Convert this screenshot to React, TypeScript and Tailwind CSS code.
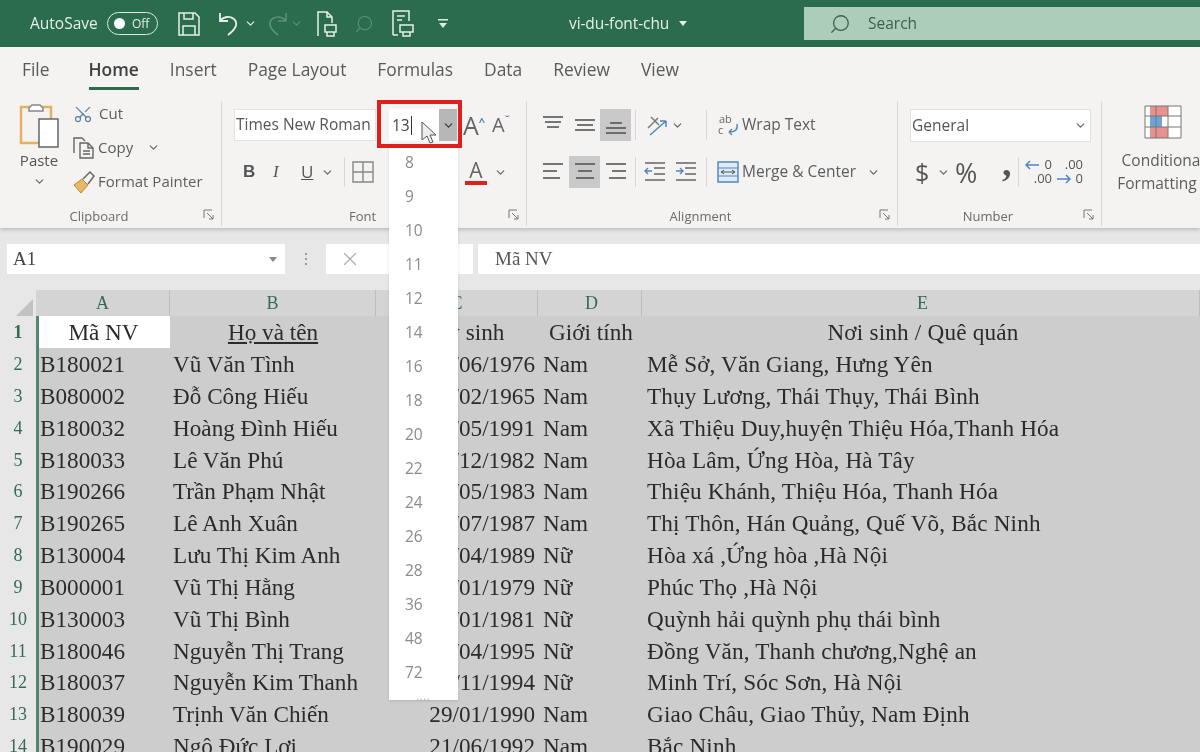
import { Scissors, Search, ChevronDown, X } from 'lucide-react'

const sheetRows = [
  ['B180021', 'Vũ Văn Tình', '12/06/1976', 'Nam', 'Mễ Sở, Văn Giang, Hưng Yên'],
  ['B080002', 'Đỗ Công Hiếu', '15/02/1965', 'Nam', 'Thụy Lương, Thái Thụy, Thái Bình'],
  ['B180032', 'Hoàng Đình Hiếu', '20/05/1991', 'Nam', 'Xã Thiệu Duy,huyện Thiệu Hóa,Thanh Hóa'],
  ['B180033', 'Lê Văn Phú', '10/12/1982', 'Nam', 'Hòa Lâm, Ứng Hòa, Hà Tây'],
  ['B190266', 'Trần Phạm Nhật', '18/05/1983', 'Nam', 'Thiệu Khánh, Thiệu Hóa, Thanh Hóa'],
  ['B190265', 'Lê Anh Xuân', '22/07/1987', 'Nam', 'Thị Thôn, Hán Quảng, Quế Võ, Bắc Ninh'],
  ['B130004', 'Lưu Thị Kim Anh', '14/04/1989', 'Nữ', 'Hòa xá ,Ứng hòa ,Hà Nội'],
  ['B000001', 'Vũ Thị Hằng', '11/01/1979', 'Nữ', 'Phúc Thọ ,Hà Nội'],
  ['B130003', 'Vũ Thị Bình', '25/01/1981', 'Nữ', 'Quỳnh hải quỳnh phụ thái bình'],
  ['B180046', 'Nguyễn Thị Trang', '16/04/1995', 'Nữ', 'Đồng Văn, Thanh chương,Nghệ an'],
  ['B180037', 'Nguyễn Kim Thanh', '19/11/1994', 'Nữ', 'Minh Trí, Sóc Sơn, Hà Nội'],
  ['B180039', 'Trịnh Văn Chiến', '29/01/1990', 'Nam', 'Giao Châu, Giao Thủy, Nam Định'],
  ['B190029', 'Ngô Đức Lợi', '21/06/1992', 'Nam', 'Bắc Ninh'],
]

const sizes = [8, 9, 10, 11, 12, 14, 16, 18, 20, 22, 24, 26, 28, 36, 48, 72]
const tabs = ['File', 'Home', 'Insert', 'Page Layout', 'Formulas', 'Data', 'Review', 'View']

const uiFont = "font-['Open_Sans',sans-serif]"
const cols = 'grid grid-cols-[36px_134px_206px_162px_104px_1fr]'

function Caret({ className = '' }: { className?: string }) {
  return <ChevronDown size={13} strokeWidth={2.2} className={`text-[#666] shrink-0 ${className}`} />
}

function Launcher() {
  return (
    <svg width="12" height="12" viewBox="0 0 12 12" fill="none" stroke="#777" className="absolute right-[6px] top-[3px]">
      <path d="M1 9V1h8" />
      <path d="M4 4l6 6M10 6v4H6" />
    </svg>
  )
}

function Lines({ widths, y = [2, 9, 16] }: { widths: number[][]; y?: number[] }) {
  return (
    <svg width="22" height="20" viewBox="0 0 22 20" stroke="#555" strokeWidth="1.6">
      {widths.map((w, i) => (
        <path key={i} d={`M${w[0]} ${y[i]}H${w[1]}`} />
      ))}
    </svg>
  )
}

function Sep({ h = 'h-[30px]' }: { h?: string }) {
  return <div className={`w-px ${h} bg-[#d6d6d6] shrink-0`} />
}

function Group({ width, label, children }: { width: string; label?: string; children: React.ReactNode }) {
  return (
    <div className={`${width} shrink-0 flex flex-col border-r border-[#d8d8d8] h-[125px] mt-[6px]`}>
      <div className="flex-1 min-h-0">{children}</div>
      {/* labels sit left of true centre, the launcher takes the room on the right */}
      <div className="relative h-[20px] pr-[23px] text-[13px] leading-[20px] text-center text-[#6a6a6a]">
        {label}
        <Launcher />
      </div>
    </div>
  )
}

function TitleBar() {
  return (
    <div className="h-[47px] bg-[#2a6c4b] flex items-center text-[#e6efe9] relative">
      <span className="ml-[30px] text-[15.5px] w-[77px]">AutoSave</span>
      <div className="w-[51px] h-[23px] rounded-full border-[1.5px] border-[#dfe9e3] flex items-center pl-[6px] gap-[7px]">
        <span className="w-[11px] h-[11px] rounded-full bg-white" />
        <span className="text-[12px]">Off</span>
      </div>
      <svg width="22" height="24" viewBox="0 0 22 24" fill="none" stroke="#e6efe9" strokeWidth="1.5" className="ml-[20px]">
        <path d="M1 1h16l4 4v18H1z" />
        <path d="M6 1v6h9V1M5 23v-9h12v9" />
      </svg>
      <svg width="22" height="26" viewBox="0 0 22 26" fill="none" stroke="#e6efe9" strokeWidth="1.8" className="ml-[18px]">
        <path d="M2 2v8h8M2 10c4-5 10-5 14-2 4 4 3 9-6 16" />
      </svg>
      <Caret className="ml-[4px] !text-[#e6efe9]" />
      <svg width="22" height="26" viewBox="0 0 22 26" fill="none" stroke="#5d9078" strokeWidth="1.6" className="ml-[9px]">
        <path d="M20 2v8h-8M20 10C16 5 10 5 6 8c-4 4-3 9 6 16" />
      </svg>
      <Caret className="ml-[2px] !text-[#5d9078]" />
      <svg width="22" height="26" viewBox="0 0 22 26" fill="none" stroke="#e6efe9" strokeWidth="1.5" className="ml-[13px]">
        <path d="M2 25V1h9l5 5v6M11 1v5h5" />
        <path d="M9 14h11v7H9zM11 21v4h7v-4" />
      </svg>
      <Search size={20} strokeWidth={1.4} className="ml-[16px] text-[#5d9078] -scale-x-100" />
      <svg width="24" height="27" viewBox="0 0 24 27" fill="none" stroke="#e6efe9" strokeWidth="1.5" className="ml-[17px]">
        <path d="M2 25V1h16v10M2 25h5" />
        <path d="M6 6h8M6 10h5" />
        <path d="M9 15h13v7H9zM12 22v4h7v-4" />
      </svg>
      <svg width="10" height="10" viewBox="0 0 10 10" fill="#dfe9e3" className="ml-[23px]">
        <path d="M0 0h10v1.5H0zM1 4h8L5 9z" />
      </svg>
      <span className="ml-[121px] text-[15.5px] tracking-[-0.1px]">vi-du-font-chu</span>
      <svg width="8" height="5" viewBox="0 0 8 5" fill="#e6efe9" className="ml-[10px]">
        <path d="M0 0h8L4 5z" />
      </svg>
      <div className="ml-auto w-[396px] h-[33px] self-start mt-[7px] bg-[#abcdb9] flex items-center pl-[25px] text-[#3f5f50]">
        <Search size={22} strokeWidth={1.4} className="-scale-x-100" />
        <span className="ml-[17px] text-[15.5px]">Search</span>
      </div>
    </div>
  )
}

function TabRow() {
  return (
    <div className="h-[48px] pb-[4px] flex items-center pl-[22px] gap-[31px] text-[17.4px] text-[#5a5a5a]">
      {tabs.map((t) =>
        t === 'Home' ? (
          <span key={t} className="relative font-semibold text-[#404040] ml-[8px]">
            {t}
            <span className="absolute left-0 right-0 top-[31px] h-[3px] bg-[#2a6c4b]" />
          </span>
        ) : (
          <span key={t}>{t}</span>
        )
      )}
    </div>
  )
}

function ClipboardGroup() {
  return (
    <Group width="w-[222px]" label="Clipboard">
      <div className="flex h-full pt-[1px]">
        <div className="w-[72px] flex flex-col items-center pl-[6px] text-[15px] text-[#555]">
          <svg width="40" height="46" viewBox="0 0 40 46" fill="none">
            <path d="M2 5h30v36H2z" stroke="#e3b164" strokeWidth="2.5" />
            <path d="M10 6l3-3h8l3 3v3H10z" fill="#fff" stroke="#888" strokeWidth="1.5" />
            <path d="M20 17h19v28H20z" fill="#fff" stroke="#666" strokeWidth="1.5" />
          </svg>
          <span className="mt-[2px] leading-[20px]">Paste</span>
          <Caret className="mt-[5px]" />
        </div>
        <div className="flex flex-col text-[15px] text-[#5d5d5d] gap-[11px]">
          <div className="flex items-center h-[23px] gap-[6px] pl-[1px]">
            <Scissors size={20} strokeWidth={1.5} className="text-[#5a7fa8] -rotate-90" />
            <span>Cut</span>
          </div>
          <div className="flex items-center h-[23px] gap-[2px]">
            <svg width="24" height="24" viewBox="0 0 24 24" fill="none" stroke="#666" strokeWidth="1.4">
              <path d="M2 17V2h8l3 3M8 22V7h8l5 5v10z" />
              <path d="M16 7v5h5M11 15h7M11 18h7" />
            </svg>
            <span>Copy</span>
            <Caret className="ml-[12px]" />
          </div>
          <div className="flex items-center h-[23px] gap-[2px]">
            <svg width="24" height="24" viewBox="0 0 24 24" fill="none">
              <path d="M2 15l8-6 6 6-7 8z" fill="#eab767" stroke="#b98a3d" strokeWidth="1" />
              <path d="M11 9l7-7 4 4-6 8" stroke="#666" strokeWidth="1.5" />
            </svg>
            <span>Format Painter</span>
          </div>
        </div>
      </div>
    </Group>
  )
}

function FontGroup() {
  return (
    <Group width="w-[305px]" label="Font">
      <div className="pl-[12px] pt-[8px]">
        <div className="flex items-center">
          <div className="w-[142px] h-[32px] bg-white border border-[#e3e3e3] flex items-center pl-[1px] text-[15.5px] text-[#555] whitespace-nowrap overflow-hidden">
            Times New Roman
          </div>
          <div className="w-[13px]" />
          {/* size box, with the highlight and open list hanging off it */}
          <div className="relative w-[68px] h-[32px] bg-white flex items-center justify-between pl-[3px] text-[15.5px] text-[#444]">
            <span className="border-r border-[#333] pr-px leading-[19px]">13</span>
            <div className="w-[18px] h-full bg-[#b7b7b7] flex items-center justify-center">
              <Caret className="!text-[#333]" />
            </div>
            <div className="absolute left-[-12px] top-[-9px] w-[85px] h-[48px] border-[4px] border-[#df1f1c] z-40" />
            <svg width="17" height="24" viewBox="0 0 17 24" className="absolute left-[32px] top-[12px] z-50">
              <path d="M1 1v18l5-4 3 7 3-1-3-7h6z" fill="#eee" stroke="#555" strokeWidth="1" />
            </svg>
            <div className={`absolute left-0 top-[37px] w-[69px] h-[554px] bg-white z-30 flex flex-col shadow-sm ${uiFont}`}>
              {sizes.map((s) => (
                <div key={s} className="h-[34px] shrink-0 flex items-center pl-[16px] text-[15.5px] text-[#8b8b8b]">
                  {s}
                </div>
              ))}
              <div className="text-center text-[#aaa] text-[10px] tracking-[1px] leading-[10px] mt-[1px]">....</div>
            </div>
          </div>
          <span className="ml-[6px] text-[25px] leading-none text-[#666]">A</span>
          <span className="text-[11px] self-start mt-[5px] text-[#4a7fb5] font-bold">^</span>
          <span className="ml-[7px] text-[20px] leading-none text-[#666]">A</span>
          <span className="text-[10px] self-start mt-[4px] text-[#4a7fb5] font-bold">ˇ</span>
        </div>
        <div className="flex items-center mt-[16px] text-[17px] text-[#555]">
          <span className="ml-[9px] w-[30px] font-bold font-['Liberation_Sans',sans-serif]">B</span>
          <span className="w-[28px] italic font-['Liberation_Serif',serif]">I</span>
          <span className="underline w-[20px]">U</span>
          <Caret />
          <div className="ml-[10px]"><Sep /></div>
          <svg width="22" height="22" viewBox="0 0 22 22" fill="none" stroke="#888" strokeWidth="1.4" className="ml-[7px]">
            <path d="M1 1h20v20H1zM11 1v20M1 11h20" />
          </svg>
          <div className="ml-[90px] flex flex-col items-center w-[24px]">
            <span className="text-[21px] leading-[22px] text-[#666]">A</span>
            <span className="w-[22px] h-[4px] bg-[#d9231f]" />
          </div>
          <Caret className="ml-[6px]" />
        </div>
      </div>
    </Group>
  )
}

function AlignmentGroup() {
  return (
    <Group width="w-[371px]" label="Alignment">
      <div className="pt-[8px] pl-[10px] text-[15.5px] text-[#5d5d5d]">
        <div className="flex items-center h-[32px]">
          <div className="w-[32px] flex justify-center"><Lines widths={[[1, 21], [3, 19], [5, 17]]} y={[2, 7, 12]} /></div>
          <div className="w-[31px] flex justify-center"><Lines widths={[[1, 21], [3, 19], [1, 21]]} y={[5, 10, 15]} /></div>
          <div className="w-[31px] h-[32px] bg-[#c9c9c9] flex items-center justify-center"><Lines widths={[[5, 17], [1, 21], [1, 21]]} y={[8, 13, 18]} /></div>
          <div className="ml-[4px]"><Sep /></div>
          <svg width="24" height="24" viewBox="0 0 24 24" fill="none" className="ml-[9px]">
            <path d="M3 15L13 5M6 4l8 8" stroke="#7a7a7a" strokeWidth="1.5" />
            <path d="M5 22L21 8M21 8h-6M21 8v6" stroke="#4f86bd" strokeWidth="1.5" />
          </svg>
          <Caret className="ml-[2px]" />
          <div className="ml-[22px]"><Sep /></div>
          <svg width="24" height="24" viewBox="0 0 24 24" fill="none" className="ml-[9px]">
            <text x="3" y="10" fontSize="11" fill="#666">ab</text>
            <text x="2" y="21" fontSize="11" fill="#666">c</text>
            <path d="M21 11c1 6-2 8-8 8m0 0l3-3m-3 3l3 3" stroke="#4f86bd" strokeWidth="1.4" />
          </svg>
          <span className="ml-[2px] whitespace-nowrap">Wrap Text</span>
        </div>
        <div className="flex items-center h-[32px] mt-[15px]">
          <div className="w-[32px] flex justify-center"><Lines widths={[[1, 21], [1, 15], [1, 18]]} /></div>
          <div className="w-[31px] h-[32px] bg-[#c9c9c9] flex items-center justify-center"><Lines widths={[[1, 21], [4, 18], [2, 20]]} /></div>
          <div className="w-[31px] flex justify-center"><Lines widths={[[1, 21], [7, 21], [4, 21]]} /></div>
          <div className="ml-[4px]"><Sep /></div>
          <svg width="24" height="22" viewBox="0 0 24 22" fill="none" className="ml-[7px]">
            <path d="M2 2h20M11 7h11M11 13h11M2 19h20" stroke="#666" strokeWidth="1.5" />
            <path d="M2 10h7M6 7l3 3-3 3" stroke="#4f86bd" strokeWidth="1.4" transform="matrix(-1 0 0 1 11 0)" />
          </svg>
          <svg width="24" height="22" viewBox="0 0 24 22" fill="none" className="ml-[7px]">
            <path d="M2 2h20M11 7h11M11 13h11M2 19h20" stroke="#666" strokeWidth="1.5" />
            <path d="M2 10h7M6 7l3 3-3 3" stroke="#4f86bd" strokeWidth="1.4" />
          </svg>
          <div className="ml-[8px]"><Sep /></div>
          <svg width="24" height="24" viewBox="0 0 24 24" fill="none" className="ml-[9px]">
            <path d="M2 2h20v20H2z" fill="#dfeaf4" stroke="#4f86bd" strokeWidth="1.4" />
            <path d="M2 8h20M2 16h20" stroke="#4f86bd" />
            <path d="M5 12h14M8 10l-3 2 3 2M16 10l3 2-3 2" stroke="#555" />
          </svg>
          <span className="ml-[2px] whitespace-nowrap">Merge &amp; Center</span>
          <Caret className="ml-[11px]" />
        </div>
      </div>
    </Group>
  )
}

function NumberGroup() {
  return (
    <Group width="w-[204px]" label="Number">
      <div className="pt-[8px] pl-[12px]">
        <div className="w-[181px] h-[33px] bg-white border border-[#e0e0e0] flex items-center justify-between pl-[1px] pr-[3px] text-[15.5px] text-[#555]">
          General
          <Caret />
        </div>
        <div className="flex items-center h-[32px] mt-[14px] text-[#555]">
          <span className="ml-[5px] w-[20px] text-[25px] leading-none">$</span>
          <Caret className="ml-[2px]" />
          <span className="ml-[5px] w-[36px] text-[27px] leading-none">%</span>
          <span className="ml-[11px] w-[16px] h-[28px] text-[38px] leading-[10px] font-bold font-['Liberation_Serif',serif]">,</span>
          <div className="mr-[5px]"><Sep /></div>
          {/* add / remove decimals */}
          <div className="w-[30px] h-[30px] relative text-[13px] leading-[13px]">
            <span className="absolute right-[2px] top-[1px]">0</span>
            <span className="absolute right-[2px] top-[15px]">.00</span>
            <svg width="14" height="10" viewBox="0 0 14 10" fill="none" stroke="#4f86bd" strokeWidth="1.5" className="absolute left-[1px] top-[3px]">
              <path d="M14 5H1M5 1L1 5l4 4" />
            </svg>
          </div>
          <div className="w-[30px] h-[30px] relative text-[13px] leading-[13px]">
            <span className="absolute right-[1px] top-[1px]">.00</span>
            <span className="absolute right-[1px] top-[15px]">0</span>
            <svg width="14" height="10" viewBox="0 0 14 10" fill="none" stroke="#4f86bd" strokeWidth="1.5" className="absolute left-[3px] top-[17px]">
              <path d="M0 5h13M9 1l4 4-4 4" />
            </svg>
          </div>
        </div>
      </div>
    </Group>
  )
}

function ConditionalGroup() {
  return (
    <div className="w-[98px] shrink-0 flex flex-col items-center pt-[10px] text-[15.5px] text-[#5d5d5d] leading-[23px] whitespace-nowrap pl-[24px]">
      <svg width="38" height="34" viewBox="0 0 38 34" fill="none" className="shrink-0">
        <path d="M1 1h36v32H1z" fill="#fff" />
        <path d="M6 1h18v10H6zM6 22h18v11H6z" fill="#e9918e" />
        <path d="M6 11h12v11H6z" fill="#6ea3d8" />
        <path d="M1 1h36v32H1zM1 11h36M1 22h36M12 1v32M24 1v32" stroke="#777" strokeWidth="1" />
      </svg>
      <span className="mt-[10px]">Conditional</span>
      <span>Formatting ▾</span>
    </div>
  )
}

function Ribbon() {
  return (
    <div className={`bg-[#f4f3f2] shadow-[0_2px_4px_rgba(0,0,0,0.18)] relative z-20 ${uiFont}`}>
      <TabRow />
      <div className="h-[133px] flex overflow-visible">
        <ClipboardGroup />
        <FontGroup />
        <AlignmentGroup />
        <NumberGroup />
        <ConditionalGroup />
      </div>
    </div>
  )
}

function FormulaBar() {
  return (
    <div className="h-[62px] bg-[#e7e7e7] flex items-start pt-[16px] pl-[7px]">
      <div className="w-[278px] h-[30px] bg-white flex items-center justify-between pl-[6px] pr-[8px] font-['Liberation_Serif',serif] text-[19px] text-[#444]">
        A1
        <svg width="8" height="5" viewBox="0 0 8 5" fill="#888"><path d="M0 0h8L4 5z" /></svg>
      </div>
      <div className="w-[41px] h-[30px] flex flex-col items-center justify-center gap-[3px]">
        <span className="w-[2px] h-[2px] bg-[#999]" />
        <span className="w-[2px] h-[2px] bg-[#999]" />
        <span className="w-[2px] h-[2px] bg-[#999]" />
      </div>
      <div className="w-[147px] h-[30px] bg-white flex items-center pl-[13px]">
        <X size={22} strokeWidth={1.2} className="text-[#aaa]" />
      </div>
      <div className="ml-[5px] flex-1 h-[30px] bg-white flex items-center pl-[17px] font-['Liberation_Serif',serif] text-[19px] text-[#555]">
        Mã NV
      </div>
    </div>
  )
}

function Sheet() {
  return (
    <div className="font-['Liberation_Serif',serif] text-[23.2px] text-[#2b2b2b]">
      <div className={`${cols} h-[26px] text-[18px] leading-[26px] text-[#356b52] text-center`}>
        <div className="bg-[#e7e7e7] flex items-end justify-end pr-[3px] pb-[2px]">
          <svg width="18" height="18" viewBox="0 0 18 18"><path d="M18 0v18H0z" fill="#c2c2c2" /></svg>
        </div>
        {['A', 'B', 'C', 'D', 'E'].map((c) => (
          <div key={c} className={`bg-[#d4d4d4] border-r border-[#bdbdbd] border-b-[3px] border-b-[#4f8a6d] ${c === 'D' || c === 'E' ? 'pl-[4px]' : ''}`}>
            {c}
          </div>
        ))}
      </div>
      <div className={`${cols} h-[32px] leading-[32px] whitespace-nowrap`}>
        <div className="bg-[#e7e7e7] text-center text-[18px] text-[#356b52] border-b border-[#d2d2d2] font-bold">1</div>
        <div className="bg-white text-center border-l-[3px] border-[#4f8a6d] pr-[2px]">Mã NV</div>
        <div className="bg-[#cdcdcd] text-center underline">Họ và tên</div>
        <div className="bg-[#cdcdcd] text-center">Ngày sinh</div>
        <div className="bg-[#cdcdcd] text-center overflow-hidden pl-[2px]">Giới tính</div>
        <div className="bg-[#cdcdcd] text-center tracking-[0.2px] pl-[4px]">Nơi sinh / Quê quán</div>
      </div>
      {sheetRows.map((r, i) => (
        <div key={r[0]} className={`${cols} h-[31.85px] leading-[33px] whitespace-nowrap`}>
          <div className="bg-[#e7e7e7] text-center text-[18px] text-[#356b52] border-b border-[#d2d2d2]">{i + 2}</div>
          <div className="bg-[#cdcdcd] pl-[1px] border-l-[3px] border-[#4f8a6d]">{r[0]}</div>
          <div className="bg-[#cdcdcd] pl-[3px]">{r[1]}</div>
          <div className="bg-[#cdcdcd] pr-[3px] text-right">{r[2]}</div>
          <div className="bg-[#cdcdcd] pl-[5px]">{r[3]}</div>
          <div className="bg-[#cdcdcd] pl-[5px] tracking-[0.15px]">{r[4]}</div>
        </div>
      ))}
    </div>
  )
}

export default function App() {
  return (
    <div className={`w-[1200px] h-[752px] overflow-hidden bg-[#cdcdcd] blur-[0.6px] ${uiFont}`}>
      <TitleBar />
      <Ribbon />
      <FormulaBar />
      <Sheet />
    </div>
  )
}
